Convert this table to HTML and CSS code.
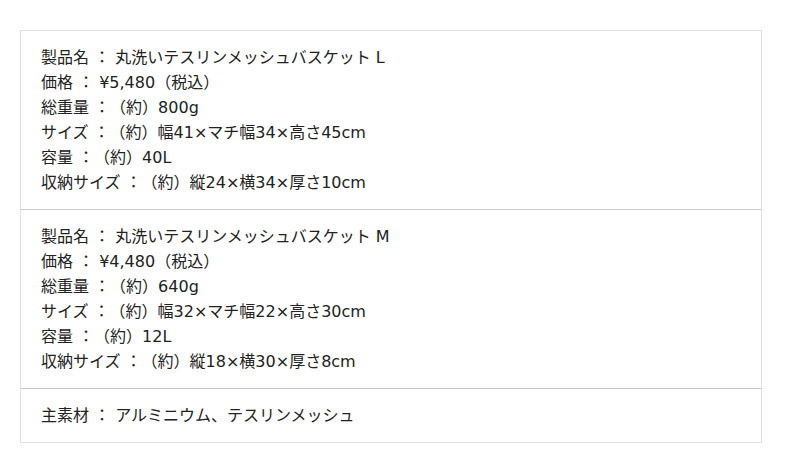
FILE: index.html
```html
<!DOCTYPE html>
<html lang="ja">
<head>
<meta charset="utf-8">
<link rel="stylesheet" href="styles.css">
</head>
<body>
<div class="page">
  <div class="spec">
    <div class="section">
      <p>製品名 ： 丸洗いテスリンメッシュバスケット L</p>
      <p>価格 ： ¥5,480（税込）</p>
      <p>総重量 ：（約）800g</p>
      <p>サイズ ：（約）幅41×マチ幅34×高さ45cm</p>
      <p>容量 ：（約）40L</p>
      <p>収納サイズ ：（約）縦24×横34×厚さ10cm</p>
    </div>
    <div class="section">
      <p>製品名 ： 丸洗いテスリンメッシュバスケット M</p>
      <p>価格 ： ¥4,480（税込）</p>
      <p>総重量 ：（約）640g</p>
      <p>サイズ ：（約）幅32×マチ幅22×高さ30cm</p>
      <p>容量 ：（約）12L</p>
      <p>収納サイズ ：（約）縦18×横30×厚さ8cm</p>
    </div>
    <div class="section">
      <p>主素材 ： アルミニウム、テスリンメッシュ</p>
    </div>
  </div>
</div>
</body>
</html>
```

FILE: styles.css
```css
html, body {
  margin: 0;
  padding: 0;
  background: #fff;
}
.page {
  padding: 30px 38px 0 20px;
}
.spec {
  border: 1px solid #e0e0e0;
  font-family: "DejaVu Sans", "Noto Sans CJK JP", sans-serif;
  font-size: 16px;
  line-height: 25px;
  color: #222;
  text-spacing-trim: space-all;
}
.section {
  padding: 14px 20px 14px 20px;
}
.section + .section {
  border-top: 1px solid #c8c8c8;
}
.section p {
  margin: 0;
}
```
